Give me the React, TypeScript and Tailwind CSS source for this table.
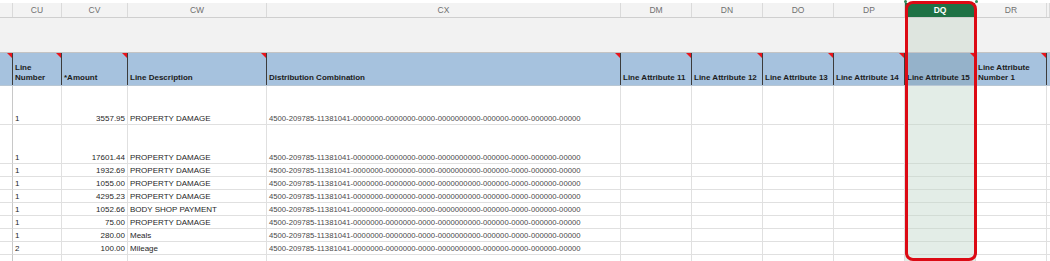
const COLS = 'grid grid-cols-[13px_49px_66px_139px_354px_71px_71px_71px_71px_71px_71px_3px]';

const letters = ['', 'CU', 'CV', 'CW', 'CX', 'DM', 'DN', 'DO', 'DP', 'DQ', 'DR', ''];

const headers = [
  '',
  'Line Number',
  '*Amount',
  'Line Description',
  'Distribution Combination',
  'Line Attribute 11',
  'Line Attribute 12',
  'Line Attribute 13',
  'Line Attribute 14',
  'Line Attribute 15',
  'Line Attribute Number 1',
  '',
];

const DIST = '4500-209785-11381041-0000000-0000000-0000-0000000000-000000-0000-000000-00000';

const rows = [
  { no: '1', amount: '3557.95', desc: 'PROPERTY DAMAGE', tall: true },
  { no: '1', amount: '17601.44', desc: 'PROPERTY DAMAGE', tall: true },
  { no: '1', amount: '1932.69', desc: 'PROPERTY DAMAGE' },
  { no: '1', amount: '1055.00', desc: 'PROPERTY DAMAGE' },
  { no: '1', amount: '4295.23', desc: 'PROPERTY DAMAGE' },
  { no: '1', amount: '1052.66', desc: 'BODY SHOP PAYMENT' },
  { no: '1', amount: '75.00', desc: 'PROPERTY DAMAGE' },
  { no: '1', amount: '280.00', desc: 'Meals' },
  { no: '2', amount: '100.00', desc: 'Mileage' },
];

const SELECTED = 9;

function CommentMark() {
  return (
    <span className="absolute top-0 right-0 w-0 h-0 border-l-[5px] border-l-transparent border-t-[5px] border-t-[#e8141b]" />
  );
}

function DataRow({ cells, tall }: { cells: string[]; tall?: boolean }) {
  return (
    <div className={`${COLS} ${tall ? 'h-[39px]' : 'h-[13px]'}`}>
      {letters.map((_, i) => {
        const value = cells[i] ?? '';
        const sel = i === SELECTED;
        return (
          <div
            key={i}
            className={`flex items-end px-[2px] border-r border-b leading-[10px] whitespace-nowrap overflow-hidden ${
              sel ? 'bg-[#e3ede7] border-[#d2dcd5]' : 'bg-white border-[#e0e0e0]'
            } ${i === 2 ? 'justify-end' : ''} ${
              i === 4 ? 'text-[7.7px] text-[#4a4a4a]' : 'text-[8px] text-[#1f1f1f]'
            } ${i === 0 ? 'border-r-[#c8c8c8]' : ''}`}
          >
            {value}
          </div>
        );
      })}
    </div>
  );
}

export default function App() {
  return (
    <div className="relative w-[1050px] h-[261px] overflow-hidden bg-white font-['Liberation_Sans',Arial,sans-serif]">
      <div className="h-[3px] bg-white" />

      {/* column letters */}
      <div className={`${COLS} h-[15px] bg-[#f3f3f3] border-b border-[#cfcfcf]`}>
        {letters.map((l, i) => (
          <div
            key={i}
            className={`flex items-center justify-center pt-px text-[8.5px] leading-none border-r border-[#dadada] ${
              i === SELECTED ? 'bg-[#1e7145] text-[#ffffff] font-bold' : 'text-[#707070]'
            }`}
          >
            {l}
          </div>
        ))}
      </div>

      {/* frozen gray band */}
      <div className={`${COLS} h-[35px] bg-[#f2f2f2] border-b border-[#c4c4c4]`}>
        {letters.map((_, i) => (
          <div key={i} className={i === SELECTED ? 'bg-[#dee5df]' : ''} />
        ))}
      </div>

      {/* header row */}
      <div className={`${COLS} h-[33px] border-b border-[#b8c7d4]`}>
        {headers.map((h, i) => (
          <div
            key={i}
            className={`relative flex items-end px-[2px] pb-[2px] text-[8px] font-bold leading-[10px] text-[#1c1c1c] border-r border-[#3c3c3c] ${
              i === SELECTED ? 'bg-[#95b2ca]' : 'bg-[#a6c2de]'
            } ${i === 1 || i === 10 ? 'whitespace-normal' : 'whitespace-nowrap'}`}
          >
            <span className={i === 1 ? 'w-[26px]' : i === 10 ? 'w-[62px]' : ''}>{h}</span>
            {i < 11 && <CommentMark />}
          </div>
        ))}
      </div>

      {rows.map((r, idx) => (
        <DataRow key={idx} tall={r.tall} cells={['', r.no, r.amount, r.desc, DIST]} />
      ))}
      <DataRow cells={[]} />

      {/* highlight around DQ */}
      <div className="absolute left-[905px] top-px w-[72px] h-[260px] border-[3px] border-[#dc0a14] rounded-[8px]" />
      <span className="absolute left-[904px] top-0 w-[3px] h-[3px] rounded-full bg-[#2e8b57]" />
      <span className="absolute left-[975px] top-0 w-[3px] h-[3px] rounded-full bg-[#2e8b57]" />
    </div>
  );
}
